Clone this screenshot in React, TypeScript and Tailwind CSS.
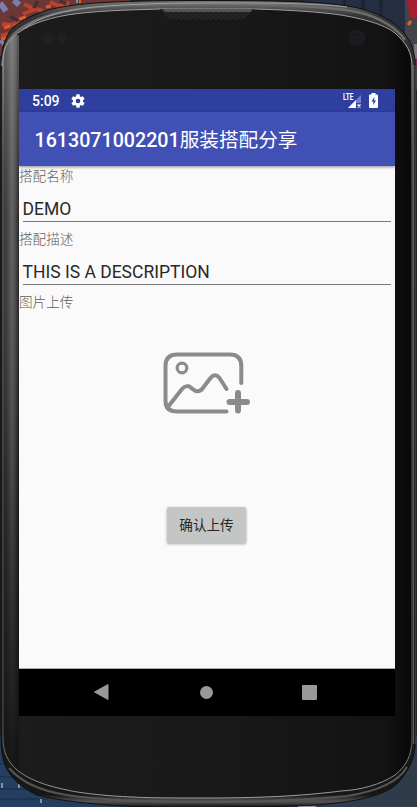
import React from "react";

const OUTER =
  "M1 72C1 52 3 43 9 33C17 21 38 11 62 7C90 2 130 0.5 208 0.5C290 0.5 330 2 358 8C388 15 402 28 409 40C414 50 415.5 58 415.5 72V738C415.5 756 411 768 398 783C384 796 360 801 318 805Q265 807.5 208 807.5Q155 808 123 806C90 804 60 801 37 795C20 787 10 777 5 765Q1 755 1 738Z";
const INNER =
  "M3 66C3 50 5 45 13 37C25 26 44 19 67 15C92 11 125 10 160 9H255C290 10 320 12 341 15C370 20 386 26 395 33C407 44 412 52 412 68V738C412 756 406 766 395 775C380 785 360 790 341 791C310 795 270 798 208 798C175 798 150 798 133 797C105 796 80 793 67 790C42 785 27 778 17 770C7 761 3 751 3 738Z";

function DeviceFrame() {
  return (
    <svg
      className="pointer-events-none absolute inset-0"
      width="417"
      height="807"
      viewBox="0 0 417 807"
      aria-hidden="true"
    >
      <defs>
        <linearGradient id="side" x1="3" x2="19" y1="0" y2="0" gradientUnits="userSpaceOnUse">
          <stop offset="0" stopColor="#292929" />
          <stop offset=".25" stopColor="#393939" />
          <stop offset=".55" stopColor="#5d5d5d" />
          <stop offset=".75" stopColor="#484848" />
          <stop offset="1" stopColor="#181818" />
        </linearGradient>
        <linearGradient id="sideShade" x1="0" x2="0" y1="36" y2="775" gradientUnits="userSpaceOnUse">
          <stop offset="0" stopColor="#bbb" stopOpacity=".35" />
          <stop offset=".25" stopColor="#999" stopOpacity=".1" />
          <stop offset=".6" stopColor="#111" stopOpacity=".25" />
          <stop offset="1" stopColor="#151515" stopOpacity="1" />
        </linearGradient>
        <linearGradient id="rim" x1="0" x2="0" y1="0" y2="807" gradientUnits="userSpaceOnUse">
          <stop offset="0" stopColor="#777" />
          <stop offset=".02" stopColor="#343434" />
          <stop offset=".5" stopColor="#252525" />
          <stop offset=".985" stopColor="#171717" />
          <stop offset=".993" stopColor="#555" />
          <stop offset="1" stopColor="#151515" />
        </linearGradient>
        <linearGradient id="face" x1="0" x2="1" y1="0" y2="0">
          <stop offset="0" stopColor="#1c1c1c" />
          <stop offset=".5" stopColor="#191919" />
          <stop offset=".93" stopColor="#131313" />
          <stop offset="1" stopColor="#090909" />
        </linearGradient>
        <linearGradient id="edge" x1="0" x2="0" y1="0" y2="807" gradientUnits="userSpaceOnUse">
          <stop offset="0" stopColor="#999" />
          <stop offset=".08" stopColor="#aaa" />
          <stop offset=".2" stopColor="#666" />
          <stop offset=".9" stopColor="#555" />
          <stop offset="1" stopColor="#aaa" />
        </linearGradient>
        <linearGradient id="water" x1="0" x2="1" y1="0" y2="0">
          <stop offset="0" stopColor="#243f61" />
          <stop offset=".4" stopColor="#263b58" />
          <stop offset="1" stopColor="#303b49" />
        </linearGradient>
        <pattern id="mesh" width="5" height="4" patternUnits="userSpaceOnUse">
          <rect width="5" height="4" fill="#252525" />
          <circle cx="1" cy="1" r=".8" fill="#121212" />
          <circle cx="3.5" cy="3" r=".8" fill="#121212" />
        </pattern>
        <clipPath id="body">
          <path d={INNER} />
        </clipPath>
      </defs>
      <rect width="417" height="807" fill="#20242d" />
      <rect width="130" height="56" fill="#6b3836" />
      <g fill="none">
        <path stroke="#777fae" strokeWidth="6" d="M0 3l6 8M14 0l5 5M1 44l3-3" />
        <path stroke="#b94330" strokeWidth="4" d="M2 24l9 1 8-3M1 36l7-2M24 4l8 4M23 14l13-5 7 2M50 2l9 4 10-3" />
        <path stroke="#ec5425" strokeWidth="3" d="M4 28l6-2M19 19l7-2M1 39l6-1M46 7l5-1" />
        <path stroke="#3d3034" strokeWidth="3" d="M10 16l8 5M38 1l-4 7M60 1l6 3" />
        <path stroke="#689aac" strokeWidth="2" d="M77 0v3" />
        <path stroke="#d96124" strokeWidth="2" d="M80 0v3" />
      </g>
      <rect x="305" width="112" height="90" fill="#252e42" />
      <path stroke="#1c2639" strokeWidth="4" d="M344 0v7M363 0v12M381 0v20" />
      <path fill="#454249" d="M405 0h12v90h-12z" />
      <path fill="#a91e2d" d="M407 0h10v19l-7-2z" />
      <path stroke="#db6332" strokeWidth="3" d="M408 25l3-4" />
      <path fill="#81758f" d="M414 44h3v15h-3z" />
      <path fill="#a61e45" d="M415 60h2v6h-2z" />
      <rect y="735" width="417" height="72" fill="url(#water)" />
      <path stroke="#1d3553" strokeWidth="2" d="M0 764h7M0 777h14M0 789h25M0 799h48" />
      <path stroke="#7797b0" strokeWidth="2" d="M2 783v5M41 799v4M19 784v4" />
      <path stroke="#9390c0" strokeWidth="2" d="M298 806.500h18" />
      <path d={OUTER} fill="url(#rim)" stroke="#101010" strokeWidth="1" />
      <path d="M2 66C4 49 7 41 14 34C27 22 49 14 72 10C100 5 142 4 208 4C285 4 330 6 357 12C382 17 399 31 405 40" fill="none" stroke="#6c6c6c" strokeWidth="2.500" />
      <path d="M22 30C40 16 65 10 95 7C130 4 165 3 208 3C270 3 315 3 347 7" fill="none" stroke="#a0a0a0" strokeWidth="1" />
      <path d={INNER} fill="url(#face)" />
      <g clipPath="url(#body)">
        <path fill="url(#side)" d="M3 35h16v738H3z" />
        <path fill="url(#sideShade)" d="M3 35h16v738H3z" />
      </g>
      <path d={INNER} fill="none" stroke="url(#edge)" strokeWidth="1" />
      <path d="M9 768C21 782 40 791 67 795C105 801 158 802 208 802C275 802 315 799 347 796C379 791 399 781 407 767" fill="none" stroke="#555" strokeWidth="2" />
      <path d="M413.500 65V744" stroke="#5d5d5d" strokeWidth="1" />
      <path d="M415.500 65V744" stroke="#393b3f" strokeWidth="1" />
      <path d="M160 9L168 18Q169 19.500 174 19.500H239Q245 19.500 248 15L255 9Z" fill="url(#mesh)" />
      <path d="M162 9H253L250 12H165Z" fill="#545454" />
      <circle cx="48" cy="38" r="5.500" fill="#202020" />
      <circle cx="62" cy="38" r="5.500" fill="#202020" />
      <circle cx="357" cy="38" r="8.500" fill="#1c1c1d" />
      <circle cx="357" cy="38" r="4" fill="#191922" />
      <circle cx="356.500" cy="37.500" r="1.500" fill="#211f38" />
    </svg>
  );
}

function StatusBar() {
  return (
    <div className="flex h-[23px] shrink-0 items-center bg-[#2f3f9f] pl-[13px] pr-[17px] text-white">
      <span className="w-[38px] whitespace-nowrap text-[14px] leading-[22px] font-medium">5:09</span>
      <svg width="16" height="16" viewBox="0 0 24 24" fill="currentColor">
        <path d="M19.430 12.980c.04-.32.070-.64.070-.98s-.03-.66-.07-.98l2.110-1.650c.19-.15.240-.42.120-.64l-2-3.460c-.12-.22-.39-.3-.61-.22l-2.490 1c-.52-.4-1.080-.73-1.690-.98l-.38-2.650C14.460 2.180 14.250 2 14 2h-4c-.25 0-.46.180-.49.420l-.38 2.650c-.61.250-1.170.590-1.690.980l-2.490-1c-.23-.09-.49 0-.61.220l-2 3.460c-.13.220-.07.490.120.640l2.110 1.650c-.04.320-.07.650-.07.980s.03.660.070.980l-2.110 1.650c-.19.150-.24.420-.12.640l2 3.460c.12.220.39.300.61.220l2.490-1c.52.400 1.080.730 1.690.980l.38 2.650c.03.240.24.420.49.420h4c.25 0 .46-.18.490-.42l.38-2.650c.61-.25 1.170-.59 1.690-.98l2.490 1c.23.090.49 0 .61-.22l2-3.460c.12-.22.070-.49-.12-.64zM12 15.500a3.500 3.500 0 1 1 0-7 3.500 3.500 0 0 1 0 7z" />
      </svg>
      <div className="ml-auto flex items-center">
        <div className="relative h-[16px] w-[25px]">
          <svg className="absolute top-[2px] left-[4px]" width="14" height="13" viewBox="0 0 14 13">
            <path d="M0 13L13 0v8H8v5z" fill="#7580c0" />
            <path d="M0 13L8 5v8z" fill="#fff" />
            <path d="M9.500 9.500l3 3M12.500 9.500l-3 3" stroke="#fff" strokeWidth="1.300" />
          </svg>
          <span className="absolute top-[-1px] left-[-1px] origin-left scale-x-[.68] text-[9.500px] leading-[9px] font-bold">LTE</span>
        </div>
        <svg width="9" height="15" viewBox="0 0 9 15">
          <path d="M0 2.500Q0 1.500 1 1.500H2.500V0h4v1.500H8q1 0 1 1V14q0 1-1 1H1q-1 0-1-1z" fill="#fff" />
          <path d="M5.500 4L2.500 8.500H4.300V12L7 7.500H5.200z" fill="#2f3f9f" />
        </svg>
      </div>
    </div>
  );
}

function Label({ children }: { children: React.ReactNode }) {
  return (
    <div className="h-[19px] whitespace-nowrap text-[13.600px] leading-[21px] font-light text-[#606060]">{children}</div>
  );
}

function Field({ value }: { value: string }) {
  return (
    <div className="mr-[4.500px] ml-[3.500px] h-[37px] border-b border-[#777] pt-[12px] text-[17.500px] leading-[24px] whitespace-nowrap text-[#292929]">
      {value}
    </div>
  );
}

function AddPicture() {
  return (
    <svg
      className="mt-[40px] ml-[142px] shrink-0"
      width="92"
      height="68"
      viewBox="0 0 92 68"
      fill="none"
      stroke="#8b8b8b"
      strokeWidth="4"
      strokeLinecap="round"
      strokeLinejoin="round"
    >
      <path d="M80.300 32V15Q80.300 3.500 69 3.500H16Q4.500 3.500 4.500 15V50Q4.500 60.500 16 60.500H65.500" />
      <circle cx="21" cy="17" r="4.800" strokeWidth="3.200" />
      <path d="M6.500 56.500L21 38Q26 32.500 31 37.500Q38 44 43 35.500L49.500 27Q54 21.500 58.500 27L65.500 38" />
      <path d="M77 42V59.500M68.500 51H86" strokeWidth="6" />
    </svg>
  );
}

export default function App() {
  return (
    <div className="relative h-[807px] w-[417px] overflow-hidden font-[Roboto,'Noto_Sans_CJK_SC',sans-serif]">
      <DeviceFrame />
      <div className="relative pt-[89px] pl-[19px]">
        <main className="flex h-[627px] w-[376px] flex-col overflow-hidden bg-[#fafafa]">
          <StatusBar />
          <header className="z-10 flex h-[54px] shrink-0 items-center bg-[#4050b5] pt-[4px] pl-[15.500px] shadow-[0_1px_3px_rgba(0,0,0,.45)]">
            <h1 className="text-[19.650px] leading-[28px] font-medium whitespace-nowrap text-white">
              1613071002201<span className="font-normal">服装搭配分享</span>
            </h1>
          </header>
          <section className="flex min-h-0 flex-1 flex-col">
            <Label>搭配名称</Label>
            <Field value="DEMO" />
            <div className="pt-[7px]">
              <Label>搭配描述</Label>
            </div>
            <Field value="THIS IS A DESCRIPTION" />
            <div className="pt-[7px]">
              <Label>图片上传</Label>
            </div>
            <AddPicture />
            <button className="mt-[88px] ml-[148px] h-[36px] w-[79px] shrink-0 rounded-[2px] bg-[#c4c6c5] text-[13.600px] leading-[36px] text-[#252525] shadow-[0_1px_3px_rgba(0,0,0,.35)]">
              确认上传
            </button>
          </section>
          <nav className="flex h-[48px] shrink-0 items-center border-t border-[#aaa] bg-black pb-px pl-[74px]">
            <button aria-label="返回">
              <svg width="16" height="18" viewBox="0 0 16 18">
                <path d="M1.500 9L15 1.500V16.500Z" fill="#999" stroke="#999" strokeLinejoin="round" />
              </svg>
            </button>
            <button aria-label="主页" className="ml-[91px] size-[13px] rounded-full bg-[#999]" />
            <button aria-label="概览" className="ml-[89px] size-[15px] rounded-[1px] bg-[#999]" />
          </nav>
        </main>
      </div>
    </div>
  );
}
